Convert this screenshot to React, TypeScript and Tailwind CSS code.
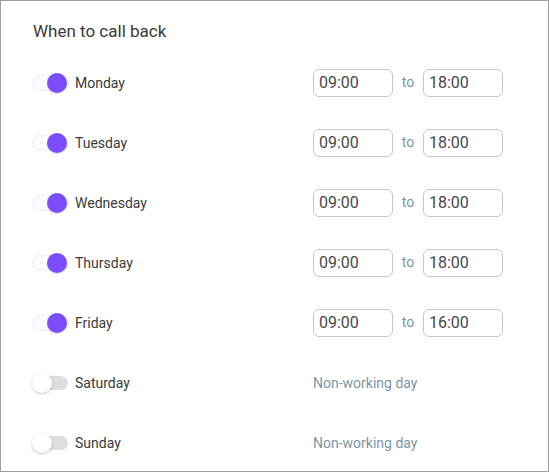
import React from "react";

type Day = { name: string; on: boolean; from?: string; to?: string };

const days: Day[] = [
  { name: "Monday", on: true, from: "09:00", to: "18:00" },
  { name: "Tuesday", on: true, from: "09:00", to: "18:00" },
  { name: "Wednesday", on: true, from: "09:00", to: "18:00" },
  { name: "Thursday", on: true, from: "09:00", to: "18:00" },
  { name: "Friday", on: true, from: "09:00", to: "16:00" },
  { name: "Saturday", on: false },
  { name: "Sunday", on: false },
];

function Switch({ on }: { on: boolean }) {
  return (
    <div className="relative w-[36px] h-[20px]">
      <div
        className={
          "absolute left-[1px] right-0 top-[3px] h-[14px] rounded-full " +
          (on
            ? "bg-[#fbfbfd] shadow-[0_0_2px_rgba(0,0,0,0.18)]"
            : "bg-[#dedede]")
        }
      />
      {on ? (
        <div className="absolute top-0 left-[15px] w-[20px] h-[20px] rounded-full bg-[#7b4dff] shadow-[0_1px_2px_rgba(0,0,0,0.15)]" />
      ) : (
        <div className="absolute top-0 left-0 w-[20px] h-[20px] rounded-full bg-white shadow-[0_1px_3px_rgba(0,0,0,0.22)]" />
      )}
    </div>
  );
}

function TimeBox({ value }: { value: string }) {
  return (
    <div className="w-[80px] h-[28px] border border-[#c8c8c8] rounded-[6px] flex items-center pl-[5px] text-[16px] text-[#484848]">
      {value}
    </div>
  );
}

export default function App() {
  return (
    <div
      className="w-[549px] h-[472px] border border-[#9e9e9e] bg-white overflow-hidden pl-[32px] pt-[18px]"
      style={{ fontFamily: "Roboto, 'Noto Sans', sans-serif" }}
    >
      <div className="text-[17px] leading-[24px] text-[#3a3a3a]">When to call back</div>
      <div className="mt-[10px] -ml-[1px] flex flex-col">
        {days.map((d) => (
          <div key={d.name} className="h-[60px] flex items-center">
            <div className="w-[43px] flex items-center">
              <Switch on={d.on} />
            </div>
            <div className="w-[238px] text-[14px] text-[#3a3a3a]">{d.name}</div>
            {d.on ? (
              <div className="flex items-center">
                <TimeBox value={d.from!} />
                <span className="w-[30px] text-center text-[14px] text-[#7d95a5] -mt-[2px]">to</span>
                <TimeBox value={d.to!} />
              </div>
            ) : (
              <div className="text-[14px] text-[#7d95a5]">Non-working day</div>
            )}
          </div>
        ))}
      </div>
    </div>
  );
}
